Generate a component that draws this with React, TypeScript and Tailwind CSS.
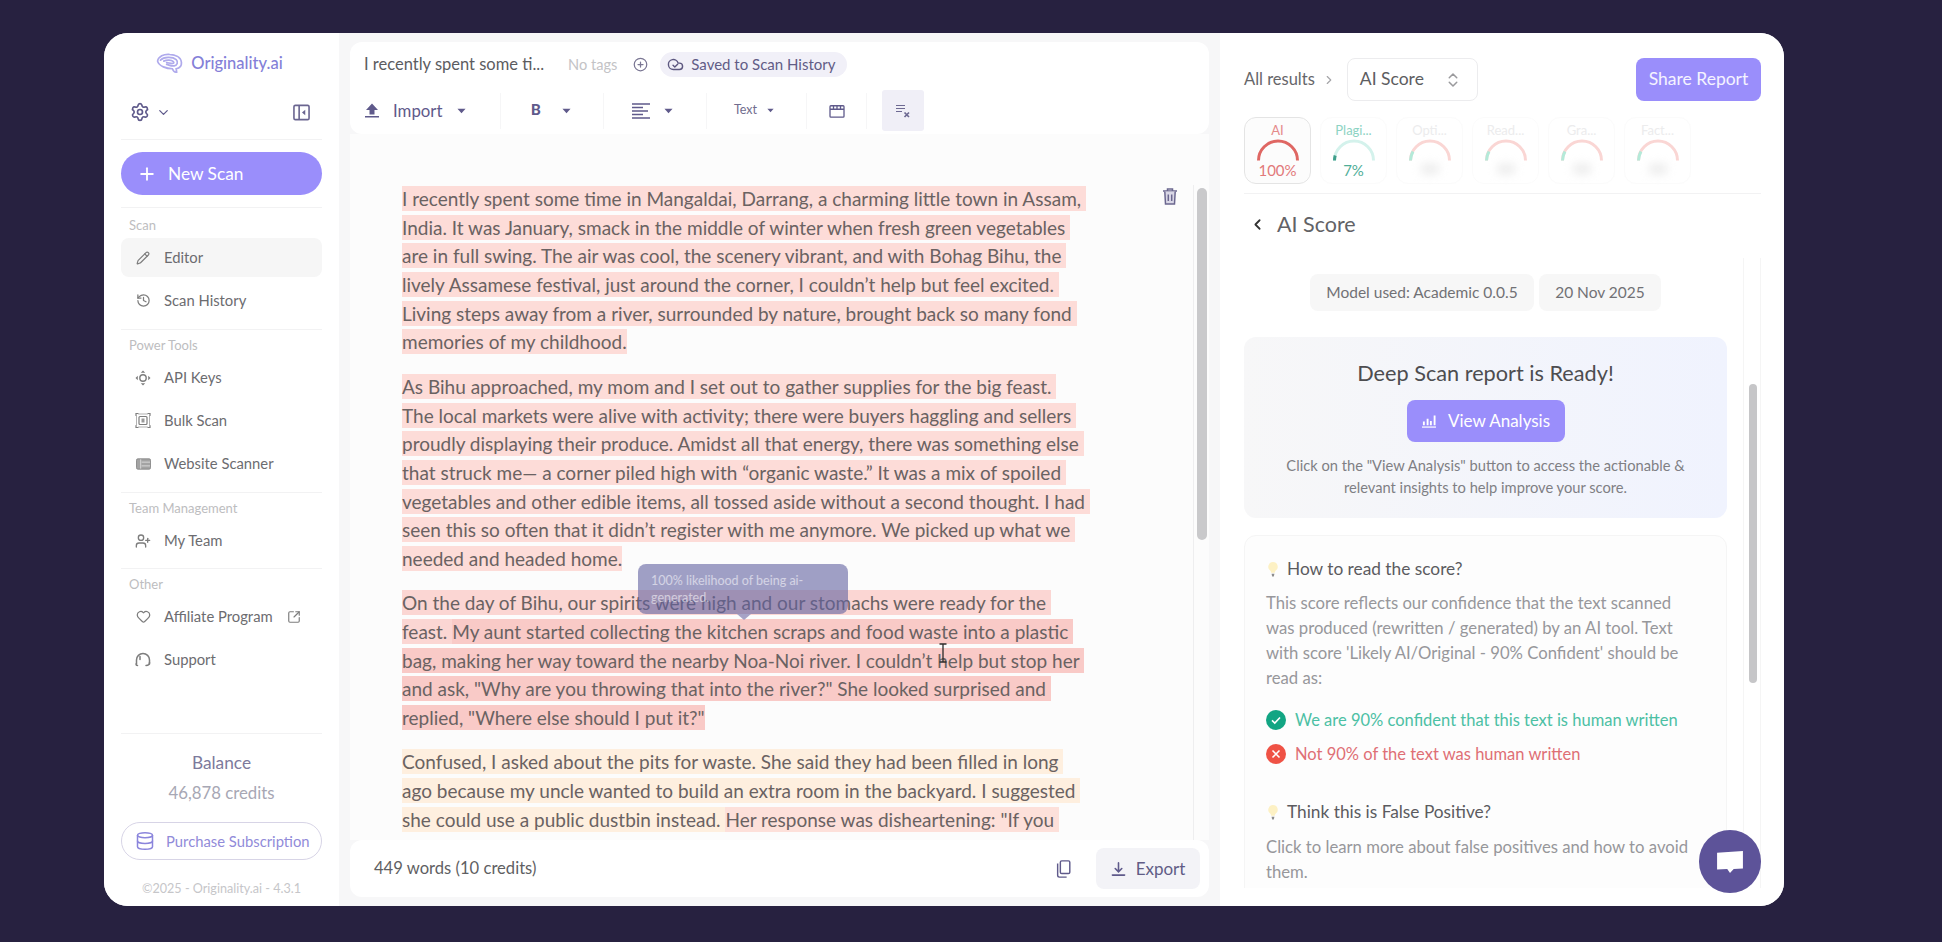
import React from "react";
import { Settings, ChevronDown, Plus, Pencil, History, UserPlus, Heart, SquareArrowOutUpRight, Database, CirclePlus, ChevronsUpDown, ChevronRight, ChevronLeft } from "lucide-react";

type Seg = [string, string];
const P1 = "bg-[#fddcd8]";
const P2 = "bg-[#fbd6d3]";
const P3 = "bg-[#f9cac7]";
const C1 = "bg-[#feefdf]";
const C2 = "bg-[#fde0da]";

const paragraphs: Seg[][][] = [
  [
    [["I recently spent some time in Mangaldai, Darrang, a charming little town in Assam, ", P1]],
    [["India. It was January, smack in the middle of winter when fresh green vegetables ", P1]],
    [["are in full swing. The air was cool, the scenery vibrant, and with Bohag Bihu, the ", P1]],
    [["lively Assamese festival, just around the corner, I couldn’t help but feel excited. ", P1]],
    [["Living steps away from a river, surrounded by nature, brought back so many fond ", P1]],
    [["memories of my childhood.", P1]],
  ],
  [
    [["As Bihu approached, my mom and I set out to gather supplies for the big feast. ", P1]],
    [["The local markets were alive with activity; there were buyers haggling and sellers ", P1]],
    [["proudly displaying their produce. Amidst all that energy, there was something else ", P1]],
    [["that struck me— a corner piled high with “organic waste.” It was a mix of spoiled ", P1]],
    [["vegetables and other edible items, all tossed aside without a second thought. I had ", P1]],
    [["seen this so often that it didn’t register with me anymore. We picked up what we ", P1]],
    [["needed and headed home.", P1]],
  ],
  [
    [["On the day of Bihu, our spirits were high and our stomachs were ready for the ", P2]],
    [["feast. ", P2], ["My aunt started collecting the kitchen scraps and food waste into a plastic ", P3]],
    [["bag, making her way toward the nearby Noa-Noi river. I couldn’t help but stop her ", P3]],
    [["and ask, \"Why are you throwing that into the river?\" She looked surprised and ", P3]],
    [["replied, \"Where else should I put it?\"", P3]],
  ],
  [
    [["Confused, I asked about the pits for waste. She said they had been filled in long ", C1]],
    [["ago because my uncle wanted to build an extra room in the backyard. I suggested ", C1]],
    [["she could use a public dustbin instead. ", C1], ["Her response was disheartening: \"If you ", C2]],
  ],
];

const Caret = ({ className = "" }: { className?: string }) => (
  <svg viewBox="0 0 10 6" className={className} fill="currentColor"><path d="M0.5 0.5h9L5 5.5z" /></svg>
);

const Divider = ({ className = "" }: { className?: string }) => <div className={`h-px bg-[#f2f2f3] ${className}`} />;

const BrainLogo = () => (
  <svg viewBox="0 0 28 22" className="h-[21px] w-[27px]" fill="none" stroke="#afaaec" strokeWidth="1.8" strokeLinecap="round">
    <path d="M1.5 8.5C2.5 3.5 8 1 14 1.5c6 .3 12 2.800 12.500 8.500.3 4-2.500 6-5.500 6.500l.5 3.500c-2 .5-3.500-1-4.500-3.500C11 16.500 3 14 1.500 8.500z" />
    <path d="M4.500 7.500C8 4 17 3.500 21 7c2.500 2.500 1 6-2 6.500-3 .5-5.500-1-8-1.500" />
    <path d="M8 8.500c3-1.500 8-1.500 10 .5 1 1 .5 2-1 2-2 0-4-.8-6-1" />
  </svg>
);

const ApiIcon = () => (
  <svg viewBox="0 0 16 16" className="h-[16px] w-[16px]" fill="#7d7d7d">
    <path d="M8 .5l2.200 2.300H5.800zM8 15.500l-2.200-2.300h4.400zM.5 8l2.300-2.200v4.400zM15.500 8l-2.300 2.200V5.800z" />
    <circle cx="8" cy="8" r="3.200" fill="none" stroke="#7d7d7d" strokeWidth="1.400" />
  </svg>
);
const BulkIcon = () => (
  <svg viewBox="0 0 16 16" className="h-[17px] w-[17px]" fill="none" stroke="#7d7d7d" strokeWidth="1.200" strokeLinecap="round">
    <path d="M1 3V1h2M13 1h2v2M15 13v2h-2M3 15H1v-2" />
    <path d="M1.500 3.500v9M14.500 3.500v9M3.500 1.500h9M3.500 14.500h9" strokeWidth=".6" />
    <rect x="4" y="4" width="8" height="8" rx="1" />
    <rect x="6.500" y="6" width="3" height="4" fill="#9a9a9a" stroke="none" />
  </svg>
);
const WebIcon = () => (
  <svg viewBox="0 0 16 12" className="h-[12px] w-[15px]">
    <rect x="0.500" y="0.500" width="15" height="11" rx="1.500" fill="#a3a3a3" stroke="#8a8a8a" />
    <path d="M5 1v10M6 4h9M6 8h9" stroke="#e9e9e9" strokeWidth="0.800" />
  </svg>
);
const SupportIcon = () => (
  <svg viewBox="0 0 16 15" className="h-[15px] w-[16px]" fill="none" stroke="#7d7d7d" strokeWidth="1.500" strokeLinecap="round">
    <path d="M1.500 12V8a6.500 6.500 0 0 1 13 0v4" />
    <path d="M5 4.500v3M14.500 10.500c0 2.500-1.500 3-3.500 3" />
    <path d="M1 12c0 1 .5 1.500 1.500 1.500" />
  </svg>
);

const NavItem = ({ icon, label, active, after }: { icon: React.ReactNode; label: string; active?: boolean; after?: React.ReactNode }) => (
  <div className={`flex h-[39px] items-center rounded-[8px] pl-[14px] text-[14.8px] text-[#6c6c70] ${active ? "bg-[#f6f6f6]" : ""}`}>
    <span className="flex w-[16px] justify-center">{icon}</span>
    <span className="ml-[13px]">{label}</span>
    {after}
  </div>
);

const Section = ({ label, children }: { label: string; children: React.ReactNode }) => (
  <div>
    <div className="flex h-[28px] items-center pl-[8px] pt-[3px] text-[13px] text-[#bdbdc0]">{label}</div>
    <div className="flex flex-col gap-[4px]">{children}</div>
  </div>
);

const Sidebar = () => (
  <aside className="flex w-[235px] shrink-0 flex-col bg-white px-[17px]">
    <div className="flex h-[60px] items-center justify-center gap-[8px] pr-[4px] pt-[1px]">
      <BrainLogo />
      <span className="text-[16.5px] font-medium text-[#8480d8]">Originality.ai</span>
    </div>
    <div className="flex h-[38px] items-center justify-between pl-[9px] pr-[11px]">
      <div className="flex items-center gap-[6px] text-[#5f5a8b]">
        <Settings className="h-[20px] w-[20px]" strokeWidth={2} />
        <ChevronDown className="h-[15px] w-[15px]" strokeWidth={2} />
      </div>
      <svg viewBox="0 0 18 18" className="mr-[1px] h-[17px] w-[17px]" fill="none" stroke="#6a6590" strokeWidth="1.700">
        <rect x="1" y="1.500" width="16" height="15" rx="1.500" />
        <path d="M6.500 1.500v15" />
        <path d="M13 6v6l-3.500-3z" fill="#6a6590" stroke="none" />
      </svg>
    </div>
    <Divider className="mt-[8px]" />
    <div className="mt-[12px] flex h-[43px] items-center rounded-full bg-[#9a8efb] pl-[16px] text-[17.3px] text-white">
      <Plus className="h-[20px] w-[20px]" strokeWidth={2.2} />
      <span className="ml-[11px]">New Scan</span>
    </div>
    <Divider className="mb-[2px] mt-[12px]" />
    <Section label="Scan">
      <NavItem active icon={<Pencil className="h-[14px] w-[14px] text-[#7d7d7d]" />} label="Editor" />
      <NavItem icon={<History className="h-[15px] w-[15px] text-[#7d7d7d]" />} label="Scan History" />
    </Section>
    <Divider className="mt-[9px]" />
    <Section label="Power Tools">
      <NavItem icon={<ApiIcon />} label="API Keys" />
      <NavItem icon={<BulkIcon />} label="Bulk Scan" />
      <NavItem icon={<WebIcon />} label="Website Scanner" />
    </Section>
    <Divider className="mt-[9px]" />
    <Section label="Team Management">
      <NavItem icon={<UserPlus className="h-[16px] w-[16px] text-[#7d7d7d]" />} label="My Team" />
    </Section>
    <Divider className="mt-[8px]" />
    <Section label="Other">
      <NavItem
        icon={<Heart className="h-[15px] w-[15px] text-[#7d7d7d]" />}
        label="Affiliate Program"
        after={<SquareArrowOutUpRight className="ml-[14px] h-[14px] w-[14px] text-[#7d7d7d]" />}
      />
      <NavItem icon={<SupportIcon />} label="Support" />
    </Section>
    <div className="flex-1" />
    <Divider />
    <div className="flex h-[88px] flex-col items-center">
      <div className="mt-[17px] text-[17.3px] leading-[24px] text-[#7d7a9c]">Balance</div>
      <div className="mt-[6px] text-[16.8px] leading-[24px] text-[#a7a7b4]">46,878 credits</div>
    </div>
    <div className="flex h-[38px] items-center rounded-full border border-[#d7d4e6] pl-[13px] text-[14.8px] text-[#918bd9]">
      <Database className="h-[20px] w-[20px] text-[#8b85dc]" strokeWidth={1.8} />
      <span className="ml-[11px]">Purchase Subscription</span>
    </div>
    <div className="mb-[7px] mt-[19px] text-center text-[12.6px] leading-[20px] text-[#c6c6c9]">©2025 - Originality.ai - 4.3.1</div>
  </aside>
);

const ToolDiv = () => <div className="h-[36px] w-px bg-[#f6f6f7]" />;

const TopBar = () => (
  <div className="h-[92px] shrink-0 rounded-[12px] bg-white">
    <div className="flex h-[45px] items-center pl-[14px]">
      <span className="w-[204px] text-[16.5px] text-[#5c5c5f]">I recently spent some ti...</span>
      <span className="text-[14.6px] text-[#c3c3c6]">No tags</span>
      <CirclePlus className="ml-[16px] h-[15px] w-[15px] text-[#7b7794]" />
      <div className="ml-[12px] flex h-[25px] w-[187px] items-center gap-[7px] rounded-full bg-[#f1f0f8] pl-[7px] text-[15px] text-[#615c86]">
        <svg viewBox="0 0 24 24" className="h-[17px] w-[17px]" fill="none" stroke="#5d5880" strokeWidth="2" strokeLinecap="round" strokeLinejoin="round">
          <path d="M17.500 19H9a7 7 0 1 1 6.710-9h1.790a4.500 4.500 0 1 1 0 9z" />
          <path d="M8.500 13l2.500 2.500 4-4" />
        </svg>
        <span>Saved to Scan History</span>
      </div>
    </div>
    <div className="flex h-[47px] items-center text-[#5f5a8b]">
      <div className="flex w-[150px] items-center pl-[15px]">
        <svg viewBox="0 0 14 15" className="h-[15px] w-[14px]" fill="#5f5a8b"><path d="M7 .5L13 7H9.500v4.500h-5V7H1zM0 13h14v1.500H0z" /></svg>
        <span className="ml-[14px] text-[16.8px]">Import</span>
        <Caret className="ml-[15px] h-[6px] w-[9px]" />
      </div>
      <ToolDiv />
      <div className="flex w-[102px] items-center pl-[30px]">
        <span className="font-[Roboto,sans-serif] text-[15.5px] font-bold">B</span>
        <Caret className="ml-[21px] h-[6px] w-[9px]" />
      </div>
      <ToolDiv />
      <div className="flex w-[102px] items-center pl-[28px]">
        <svg viewBox="0 0 18 16" className="h-[16px] w-[18px]" stroke="#5f5a8b" strokeWidth="1.400"><path d="M0 1h18M0 4.500h11M0 8h16M0 11.500h11M0 15h18" /></svg>
        <Caret className="ml-[14px] h-[6px] w-[9px]" />
      </div>
      <ToolDiv />
      <div className="flex w-[99px] items-center pl-[27px]">
        <span className="text-[12.5px] text-[#706c8e]">Text</span>
        <Caret className="ml-[10px] h-[5px] w-[7px]" />
      </div>
      <ToolDiv />
      <div className="flex w-[59px] justify-center">
        <svg viewBox="0 0 18 16" className="h-[14px] w-[16px]" fill="none" stroke="#5f5a8b" strokeWidth="1.500">
          <rect x="1" y="2" width="16" height="13" rx="1" />
          <path d="M1 6h16M5 2v3M9 2v3M13 2v3" />
        </svg>
      </div>
      <ToolDiv />
      <div className="ml-[15px] flex h-[41px] w-[42px] items-center justify-center rounded-[3px] bg-[#f0eff7]">
        <svg viewBox="0 0 16 14" className="h-[14px] w-[16px]" fill="none" stroke="#6d6992" strokeWidth="1.200">
          <path d="M1 1.500h9M1 4.500h9M1 7.500h6" />
          <path d="M9.500 8.500l4.500 4.500M14 8.500l-4.500 4.500" strokeWidth="1.700" />
        </svg>
      </div>
    </div>
  </div>
);

const Editor = () => (
  <div className="relative flex min-h-0 flex-1 justify-between overflow-hidden bg-[#fcfcfc]">
    <div className="pl-[52px] pt-[51px] text-[19px] text-[#6a6262]">
      {paragraphs.map((para, i) => (
        <div key={i} className="mb-[15.7px]">
          {para.map((line, j) => (
            <div key={j} className="h-[28.7px] whitespace-pre leading-[28.7px]">
              {line.map(([text, bg], k) => (
                <span key={k} className={`${bg} py-[1px]`}>{text}</span>
              ))}
            </div>
          ))}
        </div>
      ))}
    </div>
    <svg viewBox="0 0 14 17" className="absolute left-[813px] top-[54px] h-[17px] w-[14px]" fill="none" stroke="#6b678f" strokeWidth="1.500">
      <path d="M0 3h14M4.500 3V1h5v2" />
      <path d="M1.800 3.500l.7 12.500h9l.7-12.500" fill="#d9d7e6" />
      <path d="M5.300 6.500v6.500M8.700 6.500v6.500" />
    </svg>
    <div className="mr-[2px] mt-[51px] w-[14px] shrink-0 border-l border-[#eeeeef] pl-[3px] pt-[3px]">
      <div className="h-[352px] w-[10px] rounded-full bg-[#c9c9cb]" />
    </div>
    <div className="absolute left-[288px] top-[430px] h-[50px] w-[210px] overflow-hidden rounded-[8px] bg-[#6160a0]/60 px-[13px] pt-[8px] text-[12.5px] leading-[17px] text-white/55">
      100% likelihood of being ai-<br />generated.
    </div>
    <div className="absolute left-[387px] top-[480px] h-0 w-0 border-x-[7px] border-t-[6px] border-x-transparent border-t-[#a6a2c6]" />
    <svg viewBox="0 0 10 20" className="absolute left-[588px] top-[509px] h-[20px] w-[10px]" fill="none" stroke="#2c2c2c" strokeWidth="1.3">
      <path d="M1.500 1h7M5 1v18M1.500 19h7" />
    </svg>
  </div>
);

const BottomBar = () => (
  <div className="flex h-[57px] shrink-0 items-center rounded-[12px] bg-white pl-[24px] pr-[9px] text-[#5f5f63]">
    <span className="text-[16.6px]">449 words (10 credits)</span>
    <div className="flex-1" />
    <svg viewBox="0 0 16 20" className="mr-[25px] h-[18px] w-[15px]" fill="none" stroke="#5f5a8b" strokeWidth="1.6">
      <rect x="4.500" y="1" width="10.500" height="14" rx="1.500" />
      <path d="M1.500 4v13a2 2 0 0 0 2 2h8" />
    </svg>
    <div className="flex h-[41px] w-[104px] items-center justify-center gap-[10px] rounded-[8px] bg-[#f3f3f7] text-[17px] text-[#615c86]">
      <svg viewBox="0 0 16 16" className="h-[16px] w-[15px]" fill="none" stroke="#5f5a8b" strokeWidth="1.7" strokeLinecap="round">
        <path d="M8 1.500v9M4.500 7.500L8 11l3.500-3.500M1.500 14.500h13" />
      </svg>
      Export
    </div>
  </div>
);

const Gauge = ({ label, value, labelColor, valueColor, kind }: { label: string; value?: string; labelColor: string; valueColor?: string; kind: "ai" | "plag" | "other"; }) => (
  <div className={`flex h-[67px] w-[67px] flex-col items-center rounded-[12px] border ${kind === "ai" ? "border-[#e4e4e4] bg-[#fcfcfc]" : "border-[#fbfbfb] bg-white"}`}>
    <div className="mt-[4px] text-[13px] leading-[16px]" style={{ color: labelColor }}>{label}</div>
    <svg viewBox="0 0 44 24" className="h-[24px] w-[44px]" fill="none" strokeWidth="3" strokeLinecap="butt">
      {kind === "ai" && <path d="M2.500 22.500a19.500 19.500 0 0 1 39 0" stroke="#df6763" />}
      {kind === "plag" && (
        <>
          <path d="M2.500 22.500a19.500 19.500 0 0 1 39 0" stroke="#d4f2ec" />
          <path d="M2.500 22.500a19.500 19.500 0 0 1 .7-5" stroke="#3f9f8b" />
        </>
      )}
      {kind === "other" && (
        <>
          <path d="M2.500 22.500a19.500 19.500 0 0 1 39 0" stroke="#fad6d4" />
          <path d="M2.500 22.500a19.500 19.500 0 0 1 2.500-9" stroke="#b4ead9" />
        </>
      )}
    </svg>
    {value ? (
      <div className="mt-[-1px] text-[15px] leading-[18px]" style={{ color: valueColor }}>{value}</div>
    ) : (
      <div className="mt-[1px] h-[12px] w-[20px] rounded-full bg-[#efefef] blur-[4px]" />
    )}
  </div>
);

const Bulb = () => (
  <svg viewBox="0 0 12 18" className="h-[17px] w-[12px]">
    <path d="M6 1a5 5 0 0 1 3 9c-.8.7-1 1.500-1 2.500H4c0-1-.2-1.800-1-2.500A5 5 0 0 1 6 1z" fill="#fdf1c4" />
    <path d="M4.500 13.500h3l-.6 3H5.100z" fill="#8e8e8e" />
  </svg>
);

const RightPanel = () => (
  <section className="flex w-[564px] shrink-0 flex-col bg-white pl-[24px] pr-[23px] pt-[25px]">
    <div className="flex h-[43px] items-center">
      <span className="text-[16.5px] text-[#66666a]">All results</span>
      <ChevronRight className="ml-[7px] h-[14px] w-[14px] text-[#a5a5a8]" />
      <div className="ml-[11px] flex h-[43px] w-[131px] items-center justify-between rounded-[8px] border border-[#ececee] pl-[12px] pr-[15px] text-[17.5px] text-[#5d5d61]">
        AI Score
        <ChevronsUpDown className="h-[18px] w-[18px] text-[#9a9a9d]" />
      </div>
      <div className="flex-1" />
      <div className="flex h-[43px] w-[125px] items-center justify-center rounded-[8px] bg-[#9a8efb] text-[17.5px] text-white/90">Share Report</div>
    </div>
    <div className="mt-[16px] flex gap-[9px]">
      <Gauge kind="ai" label="AI" value="100%" labelColor="#e58a8a" valueColor="#e2797a" />
      <Gauge kind="plag" label="Plagi..." value="7%" labelColor="#8cd3c3" valueColor="#4fae98" />
      <Gauge kind="other" label="Opti..." labelColor="#ececed" />
      <Gauge kind="other" label="Read..." labelColor="#ececed" />
      <Gauge kind="other" label="Gra..." labelColor="#ececed" />
      <Gauge kind="other" label="Fact..." labelColor="#ececed" />
    </div>
    <Divider className="mt-[9px]" />
    <div className="flex h-[64px] items-center pb-[3px] pl-[5px] text-[21.5px] text-[#626266]">
      <ChevronLeft className="h-[17px] w-[17px] text-[#333]" strokeWidth={2.5} />
      <span className="ml-[11px]">AI Score</span>
    </div>
    <div className="flex h-[630px] min-h-0 shrink-0 overflow-hidden">
      <div className="w-[483px] shrink-0">
        <div className="mt-[16px] flex h-[37px] justify-center gap-[5px] text-[15.5px] text-[#717175]">
          <div className="flex w-[224px] items-center justify-center rounded-[8px] bg-[#f7f7f7]">Model used: Academic 0.0.5</div>
          <div className="flex w-[122px] items-center justify-center rounded-[8px] bg-[#f7f7f7]">20 Nov 2025</div>
        </div>
        <div className="mt-[26px] flex h-[181px] flex-col items-center rounded-[12px] bg-gradient-to-r from-[#f7f7f8] to-[#f0f3fe]">
          <div className="mt-[22px] text-[21.7px] leading-[28px] text-[#4d4d50]">Deep Scan report is Ready!</div>
          <div className="mt-[13px] flex h-[42px] w-[158px] items-center justify-center gap-[11px] rounded-[8px] bg-[#9a8efb] text-[17px] text-white">
            <svg viewBox="0 0 16 15" className="h-[14px] w-[16px]" fill="none" stroke="#fff" strokeWidth="2">
              <path d="M2.500 8v4M6.500 5v7M10 7.500V12M14 1.500V12" /><path d="M0.500 14h15" strokeWidth="1.3" />
            </svg>
            View Analysis
          </div>
          <div className="mt-[12px] text-center text-[14.7px] leading-[22px] text-[#7f7f84]">
            Click on the "View Analysis" button to access the actionable &amp;<br />relevant insights to help improve your score.
          </div>
        </div>
        <div className="mt-[17px] h-[400px] rounded-[12px] border border-[#f5f5f5] bg-[#fdfdfd] pl-[21px] pt-[21px]">
          <div className="flex h-[24px] items-center text-[17.3px] text-[#5b5b5f]">
            <span className="ml-[1px] flex w-[20px]"><Bulb /></span>How to read the score?
          </div>
          <div className="mt-[9.5px] text-[16.7px] leading-[25px] text-[#97979b]">
            This score reflects our confidence that the text scanned<br />
            was produced (rewritten / generated) by an AI tool. Text<br />
            with score 'Likely AI/Original - 90% Confident' should be<br />
            read as:
          </div>
          <div className="mt-[17.5px] flex h-[24px] items-center gap-[9px] text-[16.5px] text-[#4cc0a4]">
            <svg viewBox="0 0 20 20" className="h-[20px] w-[20px]"><circle cx="10" cy="10" r="10" fill="#12a583" /><path d="M6 10.300l2.800 2.700L14 7.500" fill="none" stroke="#fff" strokeWidth="1.6" /></svg>
            We are 90% confident that this text is human written
          </div>
          <div className="mt-[10px] flex h-[24px] items-center gap-[9px] text-[16.5px] text-[#df6f75]">
            <svg viewBox="0 0 20 20" className="h-[20px] w-[20px]"><circle cx="10" cy="10" r="10" fill="#ef5245" /><path d="M6.500 6.500l7 7M13.500 6.500l-7 7" fill="none" stroke="#fff" strokeWidth="1.6" /></svg>
            Not 90% of the text was human written
          </div>
          <div className="mt-[34px] flex h-[24px] items-center text-[17.3px] text-[#5b5b5f]">
            <span className="ml-[1px] flex w-[20px]"><Bulb /></span>Think this is False Positive?
          </div>
          <div className="mt-[10.5px] text-[16.7px] leading-[25px] text-[#97979b]">
            Click to learn more about false positives and how to avoid<br />them.
          </div>
        </div>
      </div>
      <div className="ml-[16px] h-full w-[18px] border-x border-[#f5f5f5] pl-[5px] pt-[126px]">
        <div className="h-[299px] w-[8px] rounded-full bg-[#c6c6c8]" />
      </div>
    </div>
  </section>
);

export default function App() {
  return (
    <div className="h-[942px] w-[1942px] overflow-hidden bg-[#272140] pl-[104px] pt-[33px] font-[Lato,sans-serif]">
      <div className="relative flex h-[873px] w-[1680px] overflow-hidden rounded-[24px] bg-white">
        <Sidebar />
        <main className="flex min-w-0 flex-1 flex-col bg-[#f7f7f8] pb-[9px] pl-[11px] pr-[11px] pt-[9px]">
          <TopBar />
          <Editor />
          <BottomBar />
        </main>
        <RightPanel />
        <div className="absolute left-[1595px] top-[797px] flex h-[63px] w-[62px] items-center justify-center rounded-full bg-[#5d5399]">
          <svg viewBox="0 0 30 26" className="h-[24px] w-[28px]" fill="#fff"><path d="M1 3l28-2v19l-10 .5L15 25l-3-4.500-11 .5z" /></svg>
        </div>
      </div>
    </div>
  );
}
